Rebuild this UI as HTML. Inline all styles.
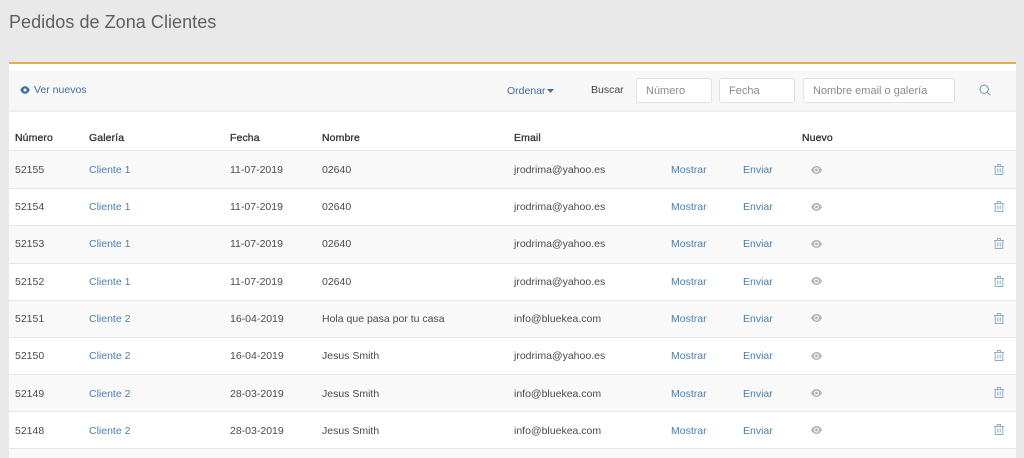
<!DOCTYPE html>
<html lang="es"><head><meta charset="utf-8"><title>Pedidos de Zona Clientes</title>
<style>
*{box-sizing:border-box}
html{background:#e9e9e9}
html,body{margin:0;padding:0;width:1024px;height:458px;overflow:hidden}
body{background:#e9e9e9;font-family:"Liberation Sans",sans-serif;color:#444;filter:blur(.3px)}
.a{position:absolute;white-space:nowrap;line-height:14px}
h1{position:absolute;left:9px;top:9px;margin:0;font:400 18px/27px "Liberation Sans",sans-serif;color:#5f5f5f;letter-spacing:.05px}
#panel{position:absolute;left:9px;top:62px;width:1007px;height:396px;background:#fff;border-top:2px solid #e2b04f}
#bar{position:absolute;left:9px;top:71px;width:1007px;height:41px;background:#f7f7f8;border-bottom:2px solid #eeeeee}
.row{position:absolute;left:9px;width:1007px;border-top:1px solid #e6e6e6}
.g{background:#f9f9f9}
.t{font-size:10.5px;color:#4a4a4a}
.h{font-size:10.5px;letter-spacing:.1px;color:#333;-webkit-text-stroke:.3px #333}
.l{font-size:10.5px;color:#4f7cab}
.in{position:absolute;top:78px;height:25px;background:#fff;border:1px solid #e2e2e2;border-radius:3px;font-size:11px;color:#8a8a8a;line-height:24px;padding-left:9px;white-space:nowrap}
svg{position:absolute;display:block}
</style></head><body>
<h1>Pedidos de Zona Clientes</h1>
<div id="panel"></div>
<div id="bar"></div>

<svg style="left:20px;top:86px" width="10" height="8" viewBox="0 0 10 8"><path d="M0.3 4C2.5 -1 7.5 -1 9.7 4C7.5 9 2.5 9 0.3 4Z" fill="#3f6f9f"/><circle cx="5" cy="4" r="1.5" fill="#f7f8f9"/></svg>
<div class="a l" style="left:34px;top:83px;color:#3f6f9f">Ver nuevos</div>
<div class="a l" style="left:507px;top:84px;color:#3f6f9f">Ordenar</div>
<svg style="left:547px;top:89px" width="7" height="4" viewBox="0 0 7 4"><path d="M0 0H7L3.5 4Z" fill="#3f6f9f"/></svg>
<div class="a t" style="left:591px;top:83px;color:#444">Buscar</div>
<div class="in" style="left:636px;width:76px">Número</div>
<div class="in" style="left:719px;width:76px">Fecha</div>
<div class="in" style="left:803px;width:152px">Nombre email o galería</div>
<svg style="left:979px;top:84px" width="12" height="12" viewBox="0 0 12 12"><circle cx="5.2" cy="5.2" r="4.2" fill="none" stroke="#6d94b8" stroke-width="1"/><path d="M8.2 8.2L11.2 11.2" stroke="#6d94b8" stroke-width="1"/></svg>

<div class="a h" style="left:15px;top:131px">Número</div>
<div class="a h" style="left:89px;top:131px">Galería</div>
<div class="a h" style="left:230px;top:131px">Fecha</div>
<div class="a h" style="left:322px;top:131px">Nombre</div>
<div class="a h" style="left:514px;top:131px">Email</div>
<div class="a h" style="left:802px;top:131px">Nuevo</div>

<div class="row g" style="top:150px;height:38px"></div>
<div class="row" style="top:188px;height:37px"></div>
<div class="row g" style="top:225px;height:38px"></div>
<div class="row" style="top:263px;height:37px"></div>
<div class="row g" style="top:300px;height:37px"></div>
<div class="row" style="top:337px;height:37px"></div>
<div class="row g" style="top:374px;height:37px"></div>
<div class="row" style="top:411px;height:37px"></div>
<div class="row g" style="top:448px;height:10px"></div>

<div class="a t" style="left:15px;top:163px">52155</div><div class="a l" style="left:89px;top:163px">Cliente 1</div><div class="a t" style="left:230px;top:163px">11-07-2019</div><div class="a t" style="left:322px;top:163px">02640</div><div class="a t" style="left:514px;top:163px">jrodrima@yahoo.es</div><div class="a l" style="left:671px;top:163px">Mostrar</div><div class="a l" style="left:743px;top:163px">Enviar</div>
<div class="a t" style="left:15px;top:200px">52154</div><div class="a l" style="left:89px;top:200px">Cliente 1</div><div class="a t" style="left:230px;top:200px">11-07-2019</div><div class="a t" style="left:322px;top:200px">02640</div><div class="a t" style="left:514px;top:200px">jrodrima@yahoo.es</div><div class="a l" style="left:671px;top:200px">Mostrar</div><div class="a l" style="left:743px;top:200px">Enviar</div>
<div class="a t" style="left:15px;top:237px">52153</div><div class="a l" style="left:89px;top:237px">Cliente 1</div><div class="a t" style="left:230px;top:237px">11-07-2019</div><div class="a t" style="left:322px;top:237px">02640</div><div class="a t" style="left:514px;top:237px">jrodrima@yahoo.es</div><div class="a l" style="left:671px;top:237px">Mostrar</div><div class="a l" style="left:743px;top:237px">Enviar</div>
<div class="a t" style="left:15px;top:275px">52152</div><div class="a l" style="left:89px;top:275px">Cliente 1</div><div class="a t" style="left:230px;top:275px">11-07-2019</div><div class="a t" style="left:322px;top:275px">02640</div><div class="a t" style="left:514px;top:275px">jrodrima@yahoo.es</div><div class="a l" style="left:671px;top:275px">Mostrar</div><div class="a l" style="left:743px;top:275px">Enviar</div>
<div class="a t" style="left:15px;top:312px">52151</div><div class="a l" style="left:89px;top:312px">Cliente 2</div><div class="a t" style="left:230px;top:312px">16-04-2019</div><div class="a t" style="left:322px;top:312px">Hola que pasa por tu casa</div><div class="a t" style="left:514px;top:312px">info@bluekea.com</div><div class="a l" style="left:671px;top:312px">Mostrar</div><div class="a l" style="left:743px;top:312px">Enviar</div>
<div class="a t" style="left:15px;top:349px">52150</div><div class="a l" style="left:89px;top:349px">Cliente 2</div><div class="a t" style="left:230px;top:349px">16-04-2019</div><div class="a t" style="left:322px;top:349px">Jesus Smith</div><div class="a t" style="left:514px;top:349px">jrodrima@yahoo.es</div><div class="a l" style="left:671px;top:349px">Mostrar</div><div class="a l" style="left:743px;top:349px">Enviar</div>
<div class="a t" style="left:15px;top:387px">52149</div><div class="a l" style="left:89px;top:387px">Cliente 2</div><div class="a t" style="left:230px;top:387px">28-03-2019</div><div class="a t" style="left:322px;top:387px">Jesus Smith</div><div class="a t" style="left:514px;top:387px">info@bluekea.com</div><div class="a l" style="left:671px;top:387px">Mostrar</div><div class="a l" style="left:743px;top:387px">Enviar</div>
<div class="a t" style="left:15px;top:424px">52148</div><div class="a l" style="left:89px;top:424px">Cliente 2</div><div class="a t" style="left:230px;top:424px">28-03-2019</div><div class="a t" style="left:322px;top:424px">Jesus Smith</div><div class="a t" style="left:514px;top:424px">info@bluekea.com</div><div class="a l" style="left:671px;top:424px">Mostrar</div><div class="a l" style="left:743px;top:424px">Enviar</div>

<svg style="left:0;top:0" width="1024" height="458" viewBox="0 0 1024 458">
<defs>
<g id="e"><path d="M0 4C2.7 -1.3 8.3 -1.3 11 4C8.3 9.3 2.7 9.3 0 4Z" fill="#b4b4b4"/><circle cx="5.5" cy="4" r="2.6" fill="#f2f2f2"/><circle cx="5.5" cy="4" r="1.4" fill="#b4b4b4"/></g>
<g id="d" fill="none" stroke="#8fadc8" stroke-width="1"><path d="M0 2.5H10M3.5 2.5V.5H6.5V2.5M1.2 2.5V10.5H8.8V2.5M3.8 4.5V8.5M6.2 4.5V8.5"/></g>
</defs>
<use href="#e" x="811" y="166"/><use href="#d" x="994" y="164"/>
<use href="#e" x="811" y="203"/><use href="#d" x="994" y="201"/>
<use href="#e" x="811" y="240"/><use href="#d" x="994" y="238"/>
<use href="#e" x="811" y="277"/><use href="#d" x="994" y="276"/>
<use href="#e" x="811" y="314"/><use href="#d" x="994" y="313"/>
<use href="#e" x="811" y="352"/><use href="#d" x="994" y="350"/>
<use href="#e" x="811" y="389"/><use href="#d" x="994" y="387"/>
<use href="#e" x="811" y="426"/><use href="#d" x="994" y="424"/>
</svg>
</body></html>
